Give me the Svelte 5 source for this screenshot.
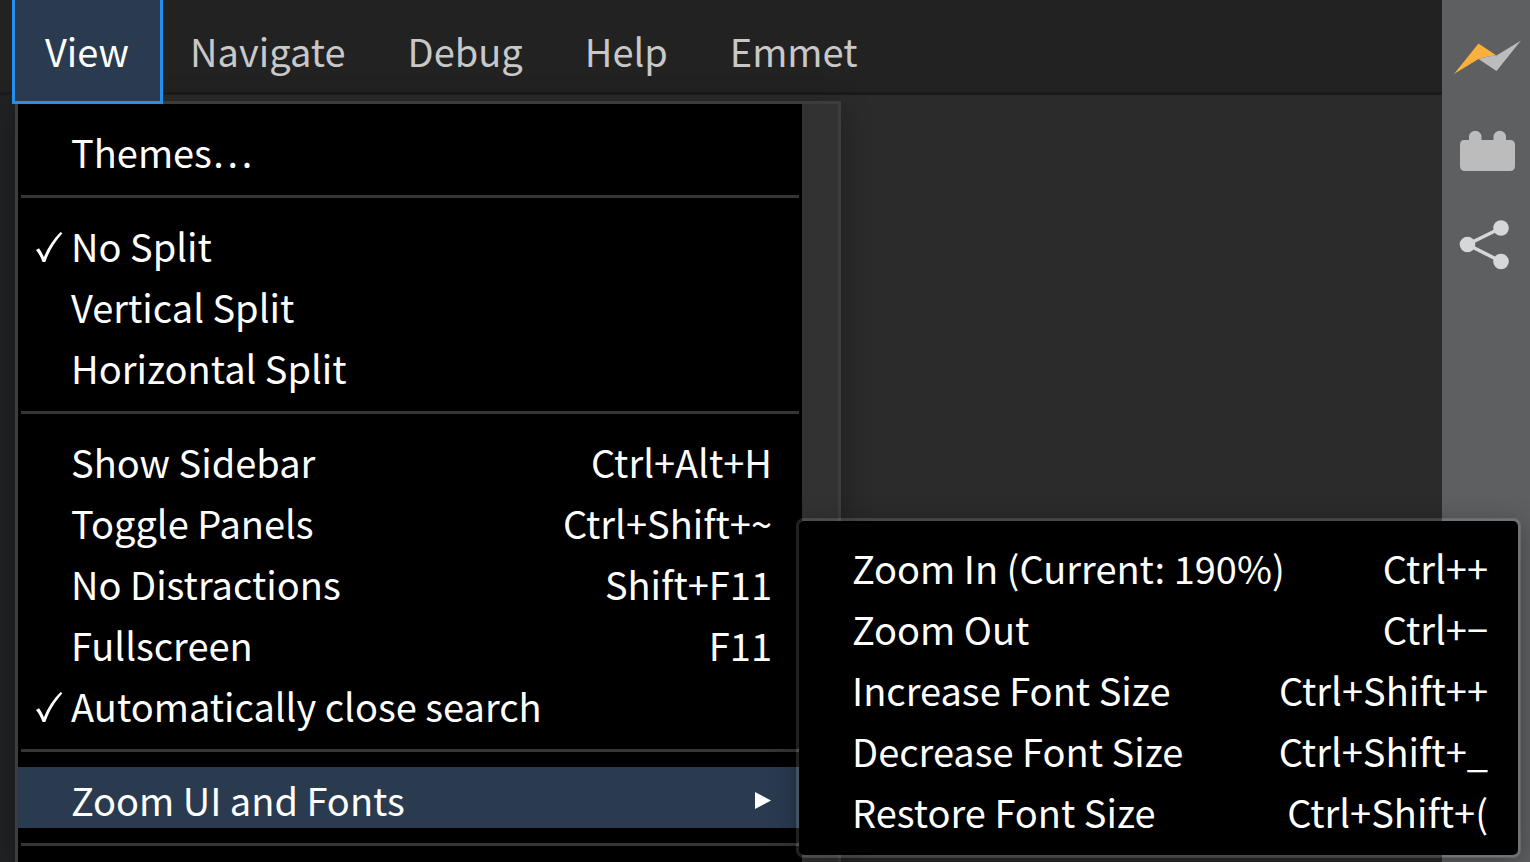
<script>
  const tabs = ['Navigate', 'Debug', 'Help', 'Emmet'];
  const groups = [
    [{ label: 'Themes…' }],
    [
      { label: 'No Split', checked: true },
      { label: 'Vertical Split' },
      { label: 'Horizontal Split' }
    ],
    [
      { label: 'Show Sidebar', keys: 'Ctrl+Alt+H' },
      { label: 'Toggle Panels', keys: 'Ctrl+Shift+~' },
      { label: 'No Distractions', keys: 'Shift+F11' },
      { label: 'Fullscreen', keys: 'F11' },
      { label: 'Automatically close search', checked: true }
    ],
    [{ label: 'Zoom UI and Fonts', open: true }]
  ];
  const zoomItems = [
    { label: 'Zoom In (Current: 190%)', keys: 'Ctrl++' },
    { label: 'Zoom Out', keys: 'Ctrl+−' },
    { label: 'Increase Font Size', keys: 'Ctrl+Shift++' },
    { label: 'Decrease Font Size', keys: 'Ctrl+Shift+_' },
    { label: 'Restore Font Size', keys: 'Ctrl+Shift+(' }
  ];
</script>

<div class="app">
  <div class="main">
    <nav class="menubar">
      <div class="tab-holder">
        <button class="tab active">View</button>
        <div class="menu">
          <div class="items">
            {#each groups as group}
              {#each group as item}
                <button class="item" class:selected={item.open}>
                  <span class="mark">
                    {#if item.checked}
                      <svg width="30" height="36" viewBox="0 -4 30 36"><path d="M1 18 4 16.200C6 18.800 7.600 21.800 8.900 25.200 12.500 16 18 7.500 25.600 0L27.400 1.200C20 9.500 14.200 18.600 10.300 30H7.500C6 25.500 4 21.500 1 18Z" fill="#fff" /></svg>
                    {/if}
                  </span>
                  <span class="label">{item.label}</span>
                  {#if item.keys}<kbd>{item.keys}</kbd>{/if}
                  {#if item.open}
                    <svg width="17" height="18" viewBox="0 0 17 18"><path d="M0 1 16 9.500 0 18Z" fill="#fff" /></svg>
                  {/if}
                </button>
              {/each}
              <hr />
            {/each}
          </div>
          <div class="track"></div>
          <div class="submenu">
            {#each zoomItems as item}
              <button class="item">
                <span class="label">{item.label}</span>
                <kbd>{item.keys}</kbd>
              </button>
            {/each}
          </div>
        </div>
      </div>
      {#each tabs as tab}
        <button class="tab">{tab}</button>
      {/each}
    </nav>
    <div class="files"></div>
  </div>
  <aside class="toolbar">
    <button aria-label="Live preview">
      <svg width="88" height="60" viewBox="0 0 88 60"><path d="M12 44 36.500 13.500 54.500 25.500C48 26 42 27 36.500 29Z" fill="#fbb03b" /><path d="M36.500 29C42 27 48 26 54.500 25.500L79 10.500 54.500 41Z" fill="#bcbcbc" /></svg>
    </button>
    <button aria-label="Extensions">
      <svg width="88" height="60" viewBox="0 0 88 60"><path d="M22 20H27V17A6 6 0 0 1 39.500 17V20H51.500V17A6 6 0 0 1 64 17V20H68Q73 20 73 25V46Q73 51 68 51H23Q18 51 18 46V25Q18 20 22 20Z" fill="#bcbcbc" /></svg>
    </button>
    <button aria-label="Share">
      <svg width="88" height="60" viewBox="0 0 88 60"><path d="M59 18 25.500 34.500 59 51.500" fill="none" stroke="#d6d8d7" stroke-width="3.500" /><g fill="#d6d8d7"><circle cx="59" cy="18" r="7.800" /><circle cx="25.500" cy="34.500" r="7.800" /><circle cx="59" cy="51.500" r="7.800" /></g></svg>
    </button>
  </aside>
</div>

<style>
  :global(body) {
    margin: 0;
    overflow: hidden;
  }
  .app {
    display: flex;
    height: 100vh;
    background: #2b2b2b;
    color: #fff;
    font: 38px/60px 'Noto Sans CJK SC', 'Open Sans', sans-serif;
  }
  button {
    margin: 0;
    padding: 0;
    border: 0;
    background: none;
    color: inherit;
    font: inherit;
    text-align: left;
    white-space: nowrap;
  }
  svg {
    display: block;
  }
  .main {
    display: flex;
    flex-direction: column;
    flex: 1;
    min-width: 0;
  }
  .menubar {
    display: flex;
    align-items: flex-start;
    height: 92px;
    padding-left: 12px;
    border-bottom: 3px solid #1b1b1b;
    background: #222;
  }
  .files {
    flex: 1;
    width: 40px;
    background: #212224;
  }
  .tab-holder {
    position: relative;
    z-index: 2;
    margin-right: -4px;
  }
  .tab {
    height: 102px;
    box-sizing: border-box;
    padding: 0 31px;
    color: #c8c8c8;
  }
  .tab.active {
    position: relative;
    z-index: 1;
    height: 104px;
    padding: 0 31px 0 30px;
    border: 3px solid #288eed;
    border-top: 0;
    background: #2a3b50;
    color: #fff;
  }
  .menu {
    position: absolute;
    top: 101px;
    left: 3px;
    display: flex;
    width: 820px;
    height: calc(100vh - 104px);
    border: 3px solid #3d3d3d;
    border-bottom: 0;
    box-shadow: 0 6px 28px rgba(0, 0, 0, 0.3);
  }
  .items {
    flex: 1;
    padding-top: 15px;
    background: #000;
  }
  .track {
    width: 36px;
    background: #323232;
  }
  .item {
    display: flex;
    align-items: center;
    box-sizing: border-box;
    width: 100%;
    height: 61px;
    padding: 4px 30px 0 0;
  }
  .item.selected {
    background: #2a3b50;
  }
  .mark {
    width: 36px;
    padding-left: 17px;
  }
  .label {
    flex: 1;
  }
  kbd {
    font: inherit;
  }
  hr {
    height: 3px;
    margin: 15px 3px;
    border: 0;
    background: #353535;
  }
  .submenu {
    position: absolute;
    top: 414px;
    left: 778px;
    box-sizing: border-box;
    width: 725px;
    padding: 14px 0 15px 53px;
    border: 3px solid rgba(255, 255, 255, 0.13);
    border-radius: 8px;
    background: #000;
    background-clip: padding-box;
    box-shadow: 0 6px 28px rgba(0, 0, 0, 0.3);
  }
  .toolbar {
    width: 88px;
    padding-top: 30px;
    background: #5d5f60;
  }
  .toolbar button {
    display: block;
    margin-bottom: 30px;
  }
</style>
